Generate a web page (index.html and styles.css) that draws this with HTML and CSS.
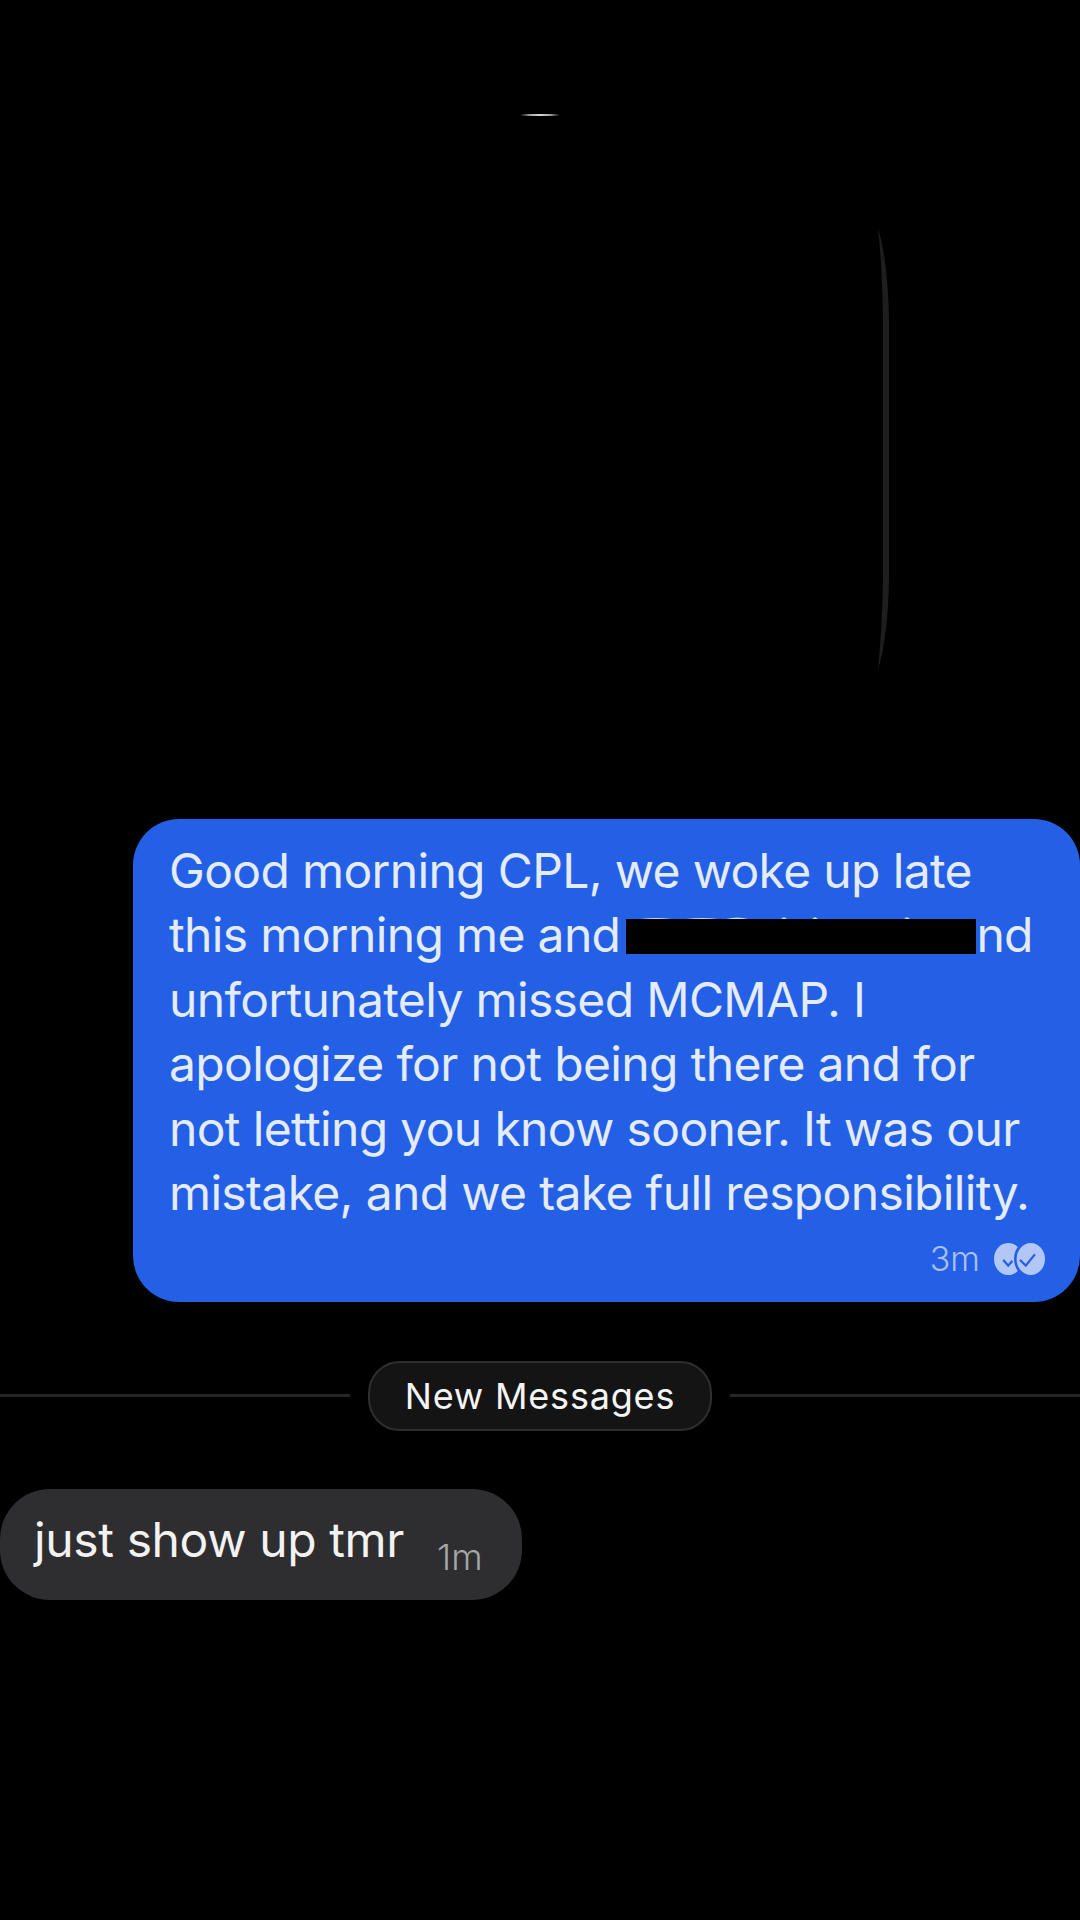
FILE: index.html
```html
<!DOCTYPE html>
<html lang="en">
<head>
    <meta charset="UTF-8">
    <meta name="viewport" content="width=device-width, initial-scale=1.0">
    <title>Messages</title>
    <link rel="stylesheet" href="styles.css">
</head>
<body>
    <svg class="glint" width="1080" height="700" viewBox="0 0 1080 700">
        <path d="M520 115 Q540 113 560 115 Q540 117 520 115Z" fill="#d8d8d8"/>
        <path d="M878 228 Q888 262 889 320 L889 580 Q888 636 878 670 Q882 630 883 580 L883 320 Q882 262 878 228Z" fill="#1e1e1e"/>
    </svg>

    <main class="thread">
        <div class="bubble-out">
            <p class="bubble-text">Good morning CPL, we woke up late<br>this morning me and<span class="redact"><svg class="peek" width="350" height="3" viewBox="0 0 350 3"><path d="M14 3 Q30 1 46 3Z M60 3 Q76 1 92 3Z M100 3 Q112 0 122 3Z M155 3 L158 1 L161 3Z M186 3 L189 1 L192 3Z M278 3 L281 1 L284 3Z" fill="#c9d7f7"/></svg></span>nd<br>unfortunately missed MCMAP. I<br>apologize for not being there and for<br>not letting you know sooner. It was our<br>mistake, and we take full responsibility.</p>
            <div class="meta-out">
                <span class="time-out">3m</span>
                <svg class="seen" width="51" height="34" viewBox="0 0 61 36" preserveAspectRatio="none">
                    <path d="M28.44 5.4 A17 17 0 1 0 28.44 30.6 A20 20 0 0 1 28.44 5.4Z" fill="#b3c7f7"/>
                    <path d="M11 19 L17 25 L22 20" fill="none" stroke="#2360e5" stroke-width="2.5"/>
                    <circle cx="44" cy="18" r="17" fill="#b3c7f7"/>
                    <path d="M31 19 L38 25 L49 13" fill="none" stroke="#2360e5" stroke-width="2.5"/>
                </svg>
            </div>
        </div>

        <div class="divider">
            <span class="divider-line"></span>
            <span class="divider-pill">New Messages</span>
            <span class="divider-line"></span>
        </div>

        <div class="bubble-in">
            <span class="bubble-in-text">just show up tmr</span>
            <span class="time-in">1m</span>
        </div>
    </main>
</body>
</html>
```

FILE: styles.css
```css
html, body {
    margin: 0;
    background: #000;
}
body {
    position: relative;
    height: 1920px;
    overflow: hidden;
    font-family: Inter, "Liberation Sans", sans-serif;
}
.glint {
    position: absolute;
    top: 0;
    left: 0;
}
.thread {
    display: flex;
    flex-direction: column;
    padding-top: 819px;
}
.bubble-out {
    box-sizing: border-box;
    height: 483px;
    margin-left: 133px;
    padding: 20px 0 0 36px;
    background: #2360e5;
    border-radius: 46px;
}
.bubble-text {
    margin: 0;
    font-size: 48px;
    font-weight: 380;
    line-height: 64.4px;
    letter-spacing: -0.65px;
    white-space: nowrap;
    color: #e4ebfb;
}
.redact {
    position: relative;
    display: inline-block;
    width: 350px;
    height: 35px;
    margin-left: 6px;
    vertical-align: -2px;
    background: #000;
}
.peek {
    position: absolute;
    left: 0;
    top: -3px;
}
.meta-out {
    display: flex;
    justify-content: flex-end;
    align-items: center;
    gap: 14px;
    margin-top: 13px;
    padding-right: 35px;
}
.time-out {
    font-size: 34px;
    font-weight: 350;
    color: #a9c0f5;
}
.divider {
    display: flex;
    align-items: center;
    justify-content: space-between;
    height: 70px;
    margin-top: 59px;
}
.divider-line {
    flex: 1;
    height: 3px;
    margin-bottom: 2px;
    background: #262626;
}
.divider-pill {
    box-sizing: border-box;
    width: 344px;
    height: 70px;
    margin: 0 18px;
    border: 2px solid #2e2e2e;
    border-radius: 32px;
    background: #141414;
    color: #f4f4f4;
    font-size: 36px;
    font-weight: 420;
    letter-spacing: 0.8px;
    line-height: 66px;
    text-align: center;
}
.bubble-in {
    display: flex;
    box-sizing: border-box;
    width: 522px;
    height: 111px;
    margin-top: 58px;
    padding-left: 34px;
    background: #2e2e30;
    border-radius: 50px;
    color: #f2f2f2;
}
.bubble-in-text {
    font-size: 48px;
    font-weight: 380;
    line-height: 102px;
    letter-spacing: -0.38px;
}
.time-in {
    margin: 46px 0 0 33px;
    font-size: 36px;
    font-weight: 350;
    line-height: 44px;
    color: #a6a6a6;
}
```
